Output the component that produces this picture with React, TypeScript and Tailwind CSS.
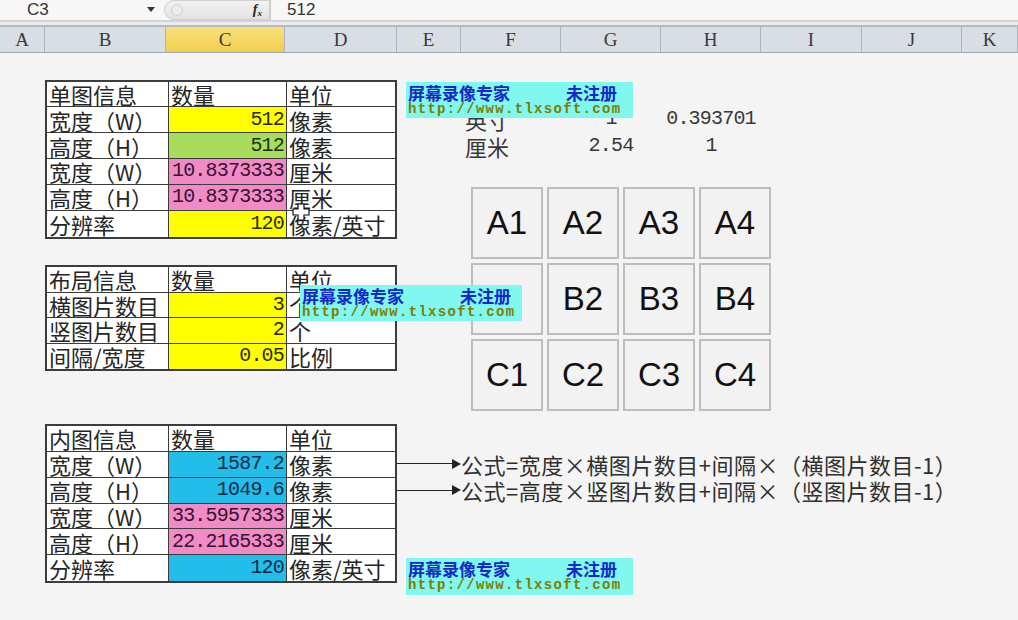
import React from 'react';

const cjk = { fontFamily: '"Noto Sans CJK SC", "Noto Sans", sans-serif' };
const mono = { fontFamily: '"Liberation Mono", "DejaVu Sans Mono", monospace' };

type Row = { label: string; value: string; unit: string; fill?: string };

const columns = [
  { name: 'A', w: 'w-[45px]' },
  { name: 'B', w: 'w-[121px]' },
  { name: 'C', w: 'w-[119px]', active: true },
  { name: 'D', w: 'w-[112px]' },
  { name: 'E', w: 'w-[64px]' },
  { name: 'F', w: 'w-[100px]' },
  { name: 'G', w: 'w-[100px]' },
  { name: 'H', w: 'w-[100px]' },
  { name: 'I', w: 'w-[101px]' },
  { name: 'J', w: 'w-[100px]' },
  { name: 'K', w: 'w-[56px]' },
];

const sizeInfo: Row[] = [
  { label: '单图信息', value: '数量', unit: '单位' },
  { label: '宽度（W）', value: '512', unit: '像素', fill: 'bg-[#ffff00] text-[#2a2a10]' },
  { label: '高度（H）', value: '512', unit: '像素', fill: 'bg-[#a8dc5c] text-[#1f3010]' },
  { label: '宽度（W）', value: '10.8373333', unit: '厘米', fill: 'bg-[#f08bc6] text-[#3a1030]' },
  { label: '高度（H）', value: '10.8373333', unit: '厘米', fill: 'bg-[#f08bc6] text-[#3a1030]' },
  { label: '分辨率', value: '120', unit: '像素/英寸', fill: 'bg-[#ffff00] text-[#2a2a10]' },
];

const layoutInfo: Row[] = [
  { label: '布局信息', value: '数量', unit: '单位' },
  { label: '横图片数目', value: '3', unit: '个', fill: 'bg-[#ffff00] text-[#2a2a10]' },
  { label: '竖图片数目', value: '2', unit: '个', fill: 'bg-[#ffff00] text-[#2a2a10]' },
  { label: '间隔/宽度', value: '0.05', unit: '比例', fill: 'bg-[#ffff00] text-[#2a2a10]' },
];

const innerInfo: Row[] = [
  { label: '内图信息', value: '数量', unit: '单位' },
  { label: '宽度（W）', value: '1587.2', unit: '像素', fill: 'bg-[#22bde8] text-[#0d2a48]' },
  { label: '高度（H）', value: '1049.6', unit: '像素', fill: 'bg-[#22bde8] text-[#0d2a48]' },
  { label: '宽度（W）', value: '33.5957333', unit: '厘米', fill: 'bg-[#f08bc6] text-[#3a1030]' },
  { label: '高度（H）', value: '22.2165333', unit: '厘米', fill: 'bg-[#f08bc6] text-[#3a1030]' },
  { label: '分辨率', value: '120', unit: '像素/英寸', fill: 'bg-[#22bde8] text-[#0d2a48]' },
];

const InfoTable: React.FC<{ rows: Row[]; place: string; rowsClass: string }> = ({ rows, place, rowsClass }) => (
  <div className={`${place} grid grid-cols-[122px_118px_1fr] ${rowsClass} border-2 border-[#3c3c3c] bg-white text-[22px] leading-[22px] text-[#262626]`}>
    {rows.map((r, i) => {
      const last = i === rows.length - 1;
      const rowLine = last ? '' : 'border-b border-[#3c3c3c]';
      return (
        <React.Fragment key={i}>
          <div className={`flex items-center pl-[2px] border-r border-[#3c3c3c] whitespace-nowrap ${rowLine}`} style={cjk}>
            {r.label}
          </div>
          {r.fill ? (
            <div className={`flex items-center justify-end pr-[2px] text-[20px] tracking-[-0.8px] border-r border-[#3c3c3c] ${rowLine} ${r.fill}`} style={mono}>
              {r.value}
            </div>
          ) : (
            <div className={`flex items-center pl-[2px] border-r border-[#3c3c3c] ${rowLine}`} style={cjk}>
              {r.value}
            </div>
          )}
          <div className={`flex items-center pl-[2px] whitespace-nowrap ${rowLine}`} style={cjk}>
            {r.unit}
          </div>
        </React.Fragment>
      );
    })}
  </div>
);

const Watermark: React.FC<{ pos: string }> = ({ pos }) => (
  <div className={`absolute ${pos} bg-[#80f8f0] pl-[2px] pt-[1px]`}>
    <div className="flex text-[17px] leading-[19px] font-bold text-[#1428c8]" style={cjk}>
      <span>屏幕录像专家</span>
      <span className="ml-[56px]">未注册</span>
    </div>
    <div className="text-[14px] leading-[15px] font-bold tracking-[1.3px] text-[#7d7d00]" style={mono}>
      http://www.tlxsoft.com
    </div>
  </div>
);

const Arrow: React.FC = () => (
  <div className="flex items-center h-full">
    <div className="flex-1 h-px bg-[#222]" />
    <svg width="9" height="10" viewBox="0 0 9 10">
      <path d="M0 0 L9 5 L0 10 Z" fill="#222" />
    </svg>
  </div>
);

const tiles = ['A1', 'A2', 'A3', 'A4', '', 'B2', 'B3', 'B4', 'C1', 'C2', 'C3', 'C4'];

export default function App() {
  return (
    <div className="w-[1018px] h-[620px] overflow-hidden bg-[#f4f4f4] select-none">
      {/* formula bar */}
      <div className="flex items-center h-[20px] bg-[#f7f7f7] text-[#333]">
        <div className="w-[140px] pl-[27px] text-[17px] leading-[20px]" style={{ fontFamily: '"Liberation Sans", sans-serif' }}>
          C3
        </div>
        <svg width="10" height="6" viewBox="0 0 10 6" className="ml-[6px]">
          <path d="M1 0 L9 0 L5 5 Z" fill="#333" />
        </svg>
        <div className="ml-[8px] flex items-center h-[20px] w-[106px] rounded-l-full border border-[#cfcfcf] bg-gradient-to-b from-[#f2f2f2] to-[#e2e2e2]">
          <div className="ml-[6px] w-[12px] h-[12px] rounded-full border border-[#d0d0d0] bg-[#ececec]" />
          <span className="ml-auto mr-[7px] text-[14px] leading-[18px] italic font-bold text-[#222]" style={{ fontFamily: '"Liberation Serif", serif' }}>
            f<sub className="text-[9px]">x</sub>
          </span>
        </div>
        <div className="w-px h-[20px] bg-[#c8c8c8]" />
        <div className="pl-[16px] text-[17px] leading-[20px]" style={{ fontFamily: '"Liberation Sans", sans-serif' }}>
          512
        </div>
      </div>
      <div className="h-[7px] border-t-2 border-[#d2d2d2] border-b-2 border-b-[#b4b9c2] bg-[#ececec]" />

      {/* column headers */}
      <div className="flex h-[26px] bg-[#d9dde4] border-b border-[#a4aab4]">
        {columns.map((c) => (
          <div
            key={c.name}
            className={`${c.w} shrink-0 flex items-center justify-center border-r border-[#aeb3bc] text-[19px] leading-[22px] text-[#3a3a3a] ${c.active ? 'bg-gradient-to-b from-[#f8e07a] to-[#f0cf4c]' : ''}`}
            style={{ fontFamily: '"Liberation Serif", serif' }}
          >
            {c.name}
          </div>
        ))}
      </div>

      {/* sheet body */}
      <div className="relative h-[567px] grid grid-cols-[45px_121px_119px_112px_64px_100px_100px_100px_101px_100px_1fr] grid-rows-[repeat(21,26.5px)]">
        <InfoTable rows={sizeInfo} place="col-start-2 col-span-3 row-start-2 row-span-6" rowsClass="grid-rows-6" />
        <InfoTable rows={layoutInfo} place="col-start-2 col-span-3 row-start-9 row-span-4" rowsClass="grid-rows-4" />
        <InfoTable rows={innerInfo} place="col-start-2 col-span-3 row-start-15 row-span-6" rowsClass="grid-rows-6" />

        {/* unit conversion */}
        <div className="col-start-6 row-start-3 pl-[4px] text-[22px] leading-[26px] text-[#383838]" style={cjk}>英寸</div>
        <div className="col-start-7 row-start-3 text-center text-[20px] leading-[26px] tracking-[-0.8px] text-[#383838]" style={mono}>1</div>
        <div className="col-start-8 row-start-3 text-center text-[20px] leading-[26px] tracking-[-0.8px] text-[#383838]" style={mono}>0.393701</div>
        <div className="col-start-6 row-start-4 pl-[4px] text-[22px] leading-[26px] text-[#383838]" style={cjk}>厘米</div>
        <div className="col-start-7 row-start-4 text-center text-[20px] leading-[26px] tracking-[-0.8px] text-[#383838]" style={mono}>2.54</div>
        <div className="col-start-8 row-start-4 text-center text-[20px] leading-[26px] tracking-[-0.8px] text-[#383838]" style={mono}>1</div>

        {/* tile layout picture */}
        <div className="col-start-6 col-span-4 row-start-6 row-span-9 pl-[10px] pt-[1px]">
          <div className="grid grid-cols-[repeat(4,72px)] grid-rows-[repeat(3,72px)] gap-[4px]">
            {tiles.map((t, i) => (
              <div
                key={i}
                className="flex items-center justify-center border-2 border-[#bdbdbd] bg-[#f2f2f2] text-[33px] text-[#111]"
                style={{ fontFamily: '"Liberation Sans", Arial, sans-serif' }}
              >
                {t}
              </div>
            ))}
          </div>
        </div>

        {/* formulas */}
        <div className="col-start-5 row-start-16"><Arrow /></div>
        <div className="col-start-6 col-span-6 row-start-16 text-[22px] leading-[26px] tracking-[0.5px] whitespace-nowrap text-[#303030]" style={cjk}>
          公式=宽度×横图片数目+间隔×（横图片数目-1）
        </div>
        <div className="col-start-5 row-start-17"><Arrow /></div>
        <div className="col-start-6 col-span-6 row-start-17 text-[22px] leading-[26px] tracking-[0.5px] whitespace-nowrap text-[#303030]" style={cjk}>
          公式=高度×竖图片数目+间隔×（竖图片数目-1）
        </div>

        {/* overlays */}
        <Watermark pos="left-[406px] top-[29px] w-[227px] h-[36px]" />
        <Watermark pos="left-[300px] top-[232px] w-[222px] h-[36px]" />
        <Watermark pos="left-[406px] top-[505px] w-[227px] h-[37px]" />

        <svg className="absolute left-[292px] top-[150px]" width="18" height="18" viewBox="0 0 18 18">
          <path d="M6 1 H12 V6 H17 V12 H12 V17 H6 V12 H1 V6 H6 Z" fill="#fff" stroke="#111" strokeWidth="1.2" />
        </svg>
      </div>
    </div>
  );
}
